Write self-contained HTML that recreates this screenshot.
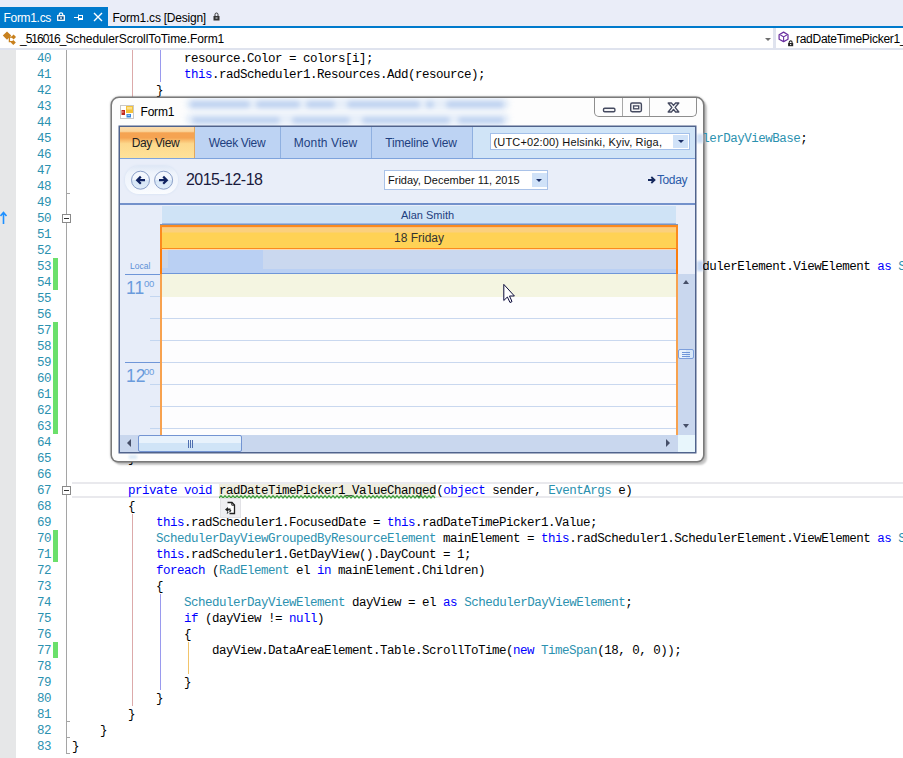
<!DOCTYPE html>
<html><head><meta charset="utf-8"><title>Form1.cs</title>
<style>
html,body{margin:0;padding:0}
body{width:903px;height:758px;position:relative;overflow:hidden;background:#fff;font-family:"Liberation Sans",sans-serif;font-size:12px;color:#000}
.abs{position:absolute}
#tabbar{left:0;top:0;width:903px;height:26px;background:#eaedf8}
#tabactive{left:0;top:7px;width:108px;height:21px;background:#007acc;color:#fff}
#tabline{left:0;top:26px;width:903px;height:2px;background:#007acc}
.tabtxt{position:absolute;top:4px;font-size:12px;line-height:14px;white-space:pre;letter-spacing:-0.15px}
#navbar{left:0;top:28px;width:903px;height:20px;background:#fff;border-bottom:2px solid #dfe3ee}
#gutter{left:0;top:50px;width:16px;height:708px;background:#e6e7e8}
.ln{position:absolute;left:16px;width:35px;text-align:right;height:16px;line-height:16px;font-family:"Liberation Mono",monospace;font-size:12.5px;letter-spacing:-0.5px;color:#2b91af;white-space:pre}
.cl{position:absolute;left:72px;height:16px;line-height:16px;font-family:"Liberation Mono",monospace;font-size:12.5px;letter-spacing:-0.5px;color:#000;white-space:pre}
.hl{background:#efeee0}
.chg{position:absolute;left:53px;width:5px;background:#6be06b}
.guide{position:absolute;width:1px}
/* form window */
#win{left:112px;top:97.5px;width:591px;height:363px;border-radius:7px 7px 6px 6px;background:#fdfdfd;box-shadow:0 0 0 1.5px #7a7a7a, 0 0 2px 2px rgba(0,0,0,.18), 3px 3px 2px 1px rgba(0,0,0,.22)}
#client{left:8px;top:29.5px;width:575px;height:325px;background:#e9eef9;box-shadow:0 0 0 1.5px #50638c;overflow:hidden}
.vtab{position:absolute;top:0;height:31px;line-height:32px;letter-spacing:-0.35px;text-align:center;color:#1e3f7f;font-size:12px;background:#bdd3f3;border-right:1px solid #8fb0e0;box-sizing:border-box}
</style></head>
<body>
<!-- VS tab strip -->
<div id="tabbar" class="abs"></div>
<div id="tabline" class="abs"></div>
<div id="tabactive" class="abs">
  <span class="tabtxt" style="left:3.5px;letter-spacing:-0.31px">Form1.cs</span>
  <svg class="abs" style="left:56.5px;top:5px" width="8" height="9" viewBox="0 0 8 9"><rect x="0.7" y="3.7" width="6.6" height="4.6" fill="#0a4f8a" stroke="#fff" stroke-width="1.3"/><path d="M2.2 3.5V2.6a1.8 1.8 0 0 1 3.6 0V3.5" stroke="#fff" fill="none" stroke-width="1.2"/><rect x="3.2" y="5.2" width="1.6" height="1.6" fill="#fff"/></svg>
  <svg class="abs" style="left:74px;top:6px" width="10" height="9" viewBox="0 0 10 9"><path d="M0 4.5H4M4.5 1.5V7.5M4.5 2.5H8.5M4.5 5.5H8.5M8.5 2V7M4.5 6.5H8.5" stroke="#fff" stroke-width="1" fill="none"/></svg>
  <svg class="abs" style="left:93px;top:5px" width="10" height="10" viewBox="0 0 10 10"><path d="M1 1L9 9M9 1L1 9" stroke="#fff" stroke-width="1.4" fill="none"/></svg>
</div>
<span class="tabtxt abs" style="left:112.5px;top:11px;color:#000;letter-spacing:-0.23px">Form1.cs [Design]</span>
<svg class="abs" style="left:213px;top:12px" width="7" height="9" viewBox="0 0 7 9"><rect x="0.5" y="4" width="6" height="4.5" fill="#333"/><path d="M2 4V2.5a1.5 1.5 0 0 1 3 0V4" stroke="#333" fill="none" stroke-width="1"/><rect x="2.5" y="5.5" width="2" height="1" fill="#eaedf8"/></svg>

<!-- nav bar -->
<div id="navbar" class="abs">
  <svg class="abs" style="left:1px;top:1.5px" width="16" height="16" viewBox="0 0 16 16"><path d="M1.8 5.6L6 1.4L10.2 5.6L6 9.8Z" fill="#c8811e"/><path d="M12.4 7.2H8.4V11.7H12.2" stroke="#c8811e" stroke-width="1.3" fill="none"/><path d="M10.2 7L12.6 4.6L15 7L12.6 9.4Z" fill="#c8811e"/><path d="M9.8 12.6L12.3 10.1L14.8 12.6L12.3 15.1Z" fill="#c8811e"/></svg>
  <span class="abs" style="left:20px;top:4px;font-size:12px;line-height:14px;white-space:pre;letter-spacing:-0.08px"><span style="letter-spacing:-1px">_516016_</span>SchedulerScrollToTime.Form1</span>
  <div class="abs" style="left:765px;top:10px;width:0;height:0;border-left:3px solid transparent;border-right:3px solid transparent;border-top:3px solid #6e6e6e"></div>
  <div class="abs" style="left:773px;top:0;width:3px;height:20px;background:#dfe3ee"></div>
  <svg class="abs" style="left:777.2px;top:2.6px" width="17" height="16" viewBox="0 0 17 16"><path d="M6.6 1.1L11 3.7V8.2L6.6 10.6L2.1 8.2V3.7Z" fill="#fff" stroke="#6a2fa0" stroke-width="1.25" stroke-linejoin="round"/><path d="M6.6 10.4V5.9L3.4 4M6.6 5.9L9.8 4" stroke="#6a2fa0" stroke-width="1.1" fill="none"/><rect x="11.1" y="12" width="5.1" height="3.2" fill="#262626"/><path d="M12.2 12V11.3a1.45 1.45 0 0 1 2.9 0V12" stroke="#262626" fill="none" stroke-width="1.1"/><rect x="13.1" y="13" width="1.1" height="1.1" fill="#fff"/></svg>
  <span class="abs" style="left:796px;top:4px;font-size:12px;line-height:14px;white-space:pre;letter-spacing:-0.28px">radDateTimePicker1_ValueChanged(object sender,</span>
</div>

<!-- editor -->
<div id="gutter" class="abs"></div>
<div class="abs" style="left:66px;top:50px;width:1px;height:704px;background:#a5a5a5"></div>
<div class="abs" style="left:72px;top:482px;width:840px;height:12px;border:2px solid #e9e9ed;border-right:0;border-left:0"></div>
<!-- change bars -->
<div class="chg" style="top:258px;height:32px"></div>
<div class="chg" style="top:322px;height:112px"></div>
<div class="chg" style="top:530px;height:32px"></div>
<div class="chg" style="top:642px;height:16px"></div>
<!-- indent guides -->
<div class="guide" style="left:132px;top:50px;height:48px;background:#dcaaaa"></div>
<div class="guide" style="left:160px;top:50px;height:32px;background:#9a9aee"></div>
<div class="guide" style="left:132px;top:514px;height:192px;background:#dcaaaa"></div>
<div class="guide" style="left:160px;top:594px;height:96px;background:#9a9aee"></div>
<div class="guide" style="left:188px;top:642px;height:32px;background:#f2c46a"></div>
<!-- outline boxes -->
<div class="abs" style="left:62px;top:214px;width:7px;height:7px;border:1px solid #8a8a8a;background:#fff"><div class="abs" style="left:1px;top:3px;width:5px;height:1px;background:#333"></div></div>
<div class="abs" style="left:62px;top:486px;width:7px;height:7px;border:1px solid #8a8a8a;background:#fff"><div class="abs" style="left:1px;top:3px;width:5px;height:1px;background:#333"></div></div>
<div class="abs" style="left:66px;top:193px;width:4px;height:1px;background:#a5a5a5"></div>
<div class="abs" style="left:66px;top:721px;width:4px;height:1px;background:#a5a5a5"></div>
<div class="abs" style="left:66px;top:737px;width:4px;height:1px;background:#a5a5a5"></div>
<div class="abs" style="left:66px;top:753px;width:4px;height:1px;background:#a5a5a5"></div>
<!-- blue arrow in margin -->
<svg class="abs" style="left:0;top:211px" width="8" height="13" viewBox="0 0 8 13"><path d="M3.5 13V2M0.5 5L3.5 1.5L6.5 5" stroke="#1e90ff" stroke-width="1.6" fill="none"/></svg>
<div class="ln" style="top:51px">40</div>
<div class="cl" style="top:51px">                resource.Color = colors[i];</div>
<div class="ln" style="top:67px">41</div>
<div class="cl" style="top:67px">                <span style="color:#0000ff">this</span>.radScheduler1.Resources.Add(resource);</div>
<div class="ln" style="top:83px">42</div>
<div class="cl" style="top:83px">            }</div>
<div class="ln" style="top:99px">43</div>
<div class="ln" style="top:115px">44</div>
<div class="ln" style="top:131px">45</div>
<div class="ln" style="top:147px">46</div>
<div class="ln" style="top:163px">47</div>
<div class="ln" style="top:179px">48</div>
<div class="ln" style="top:195px">49</div>
<div class="ln" style="top:211px">50</div>
<div class="ln" style="top:227px">51</div>
<div class="ln" style="top:243px">52</div>
<div class="ln" style="top:259px">53</div>
<div class="ln" style="top:275px">54</div>
<div class="ln" style="top:291px">55</div>
<div class="ln" style="top:307px">56</div>
<div class="ln" style="top:323px">57</div>
<div class="ln" style="top:339px">58</div>
<div class="ln" style="top:355px">59</div>
<div class="ln" style="top:371px">60</div>
<div class="ln" style="top:387px">61</div>
<div class="ln" style="top:403px">62</div>
<div class="ln" style="top:419px">63</div>
<div class="ln" style="top:435px">64</div>
<div class="ln" style="top:451px">65</div>
<div class="cl" style="top:451px">        }</div>
<div class="ln" style="top:467px">66</div>
<div class="ln" style="top:483px">67</div>
<div class="cl" style="top:483px">        <span style="color:#0000ff">private</span> <span style="color:#0000ff">void</span> <span class="hl">radDateTimePicker1_ValueChanged</span>(<span style="color:#0000ff">object</span> sender, <span style="color:#2b91af">EventArgs</span> e)</div>
<div class="ln" style="top:499px">68</div>
<div class="cl" style="top:499px">        {</div>
<div class="ln" style="top:515px">69</div>
<div class="cl" style="top:515px">            <span style="color:#0000ff">this</span>.radScheduler1.FocusedDate = <span style="color:#0000ff">this</span>.radDateTimePicker1.Value;</div>
<div class="ln" style="top:531px">70</div>
<div class="cl" style="top:531px">            <span style="color:#2b91af">SchedulerDayViewGroupedByResourceElement</span> mainElement = <span style="color:#0000ff">this</span>.radScheduler1.SchedulerElement.ViewElement <span style="color:#0000ff">as</span> <span style="color:#2b91af">SchedulerDayViewGroupedByResourceElement</span>;</div>
<div class="ln" style="top:547px">71</div>
<div class="cl" style="top:547px">            <span style="color:#0000ff">this</span>.radScheduler1.GetDayView().DayCount = 1;</div>
<div class="ln" style="top:563px">72</div>
<div class="cl" style="top:563px">            <span style="color:#0000ff">foreach</span> (<span style="color:#2b91af">RadElement</span> el <span style="color:#0000ff">in</span> mainElement.Children)</div>
<div class="ln" style="top:579px">73</div>
<div class="cl" style="top:579px">            {</div>
<div class="ln" style="top:595px">74</div>
<div class="cl" style="top:595px">                <span style="color:#2b91af">SchedulerDayViewElement</span> dayView = el <span style="color:#0000ff">as</span> <span style="color:#2b91af">SchedulerDayViewElement</span>;</div>
<div class="ln" style="top:611px">75</div>
<div class="cl" style="top:611px">                <span style="color:#0000ff">if</span> (dayView != <span style="color:#0000ff">null</span>)</div>
<div class="ln" style="top:627px">76</div>
<div class="cl" style="top:627px">                {</div>
<div class="ln" style="top:643px">77</div>
<div class="cl" style="top:643px">                    dayView.DataAreaElement.Table.ScrollToTime(<span style="color:#0000ff">new</span> <span style="color:#2b91af">TimeSpan</span>(18, 0, 0));</div>
<div class="ln" style="top:659px">78</div>
<div class="ln" style="top:675px">79</div>
<div class="cl" style="top:675px">                }</div>
<div class="ln" style="top:691px">80</div>
<div class="cl" style="top:691px">            }</div>
<div class="ln" style="top:707px">81</div>
<div class="cl" style="top:707px">        }</div>
<div class="ln" style="top:723px">82</div>
<div class="cl" style="top:723px">    }</div>
<div class="ln" style="top:739px">83</div>
<div class="cl" style="top:739px">}</div>
<!-- small refactor icon -->
<svg class="abs" style="left:219px;top:494.6px" width="217" height="4" viewBox="0 0 217 4"><polyline points="0,3 2,0.6 4,3 6,0.6 8,3 10,0.6 12,3 14,0.6 16,3 18,0.6 20,3 22,0.6 24,3 26,0.6 28,3 30,0.6 32,3 34,0.6 36,3 38,0.6 40,3 42,0.6 44,3 46,0.6 48,3 50,0.6 52,3 54,0.6 56,3 58,0.6 60,3 62,0.6 64,3 66,0.6 68,3 70,0.6 72,3 74,0.6 76,3 78,0.6 80,3 82,0.6 84,3 86,0.6 88,3 90,0.6 92,3 94,0.6 96,3 98,0.6 100,3 102,0.6 104,3 106,0.6 108,3 110,0.6 112,3 114,0.6 116,3 118,0.6 120,3 122,0.6 124,3 126,0.6 128,3 130,0.6 132,3 134,0.6 136,3 138,0.6 140,3 142,0.6 144,3 146,0.6 148,3 150,0.6 152,3 154,0.6 156,3 158,0.6 160,3 162,0.6 164,3 166,0.6 168,3 170,0.6 172,3 174,0.6 176,3 178,0.6 180,3 182,0.6 184,3 186,0.6 188,3 190,0.6 192,3 194,0.6 196,3 198,0.6 200,3 202,0.6 204,3 206,0.6 208,3 210,0.6 212,3 214,0.6 216,3" fill="none" stroke="#3f9e3f" stroke-width="1.2" stroke-linejoin="round"/></svg>
<div class="abs" style="left:220px;top:498px;width:19px;height:18px;background:#efeff2;border:1px solid #e2e2e6;box-sizing:content-box"></div>
<svg class="abs" style="left:224px;top:501px" width="12" height="14" viewBox="0 0 12 14"><path d="M3.5 1.5H8L10.5 4V12.5H5.5" fill="#fff" stroke="#222" stroke-width="1.3"/><path d="M7.8 1.5V4.2H10.5" fill="none" stroke="#222" stroke-width="1"/><path d="M1 8.5L4 6v1.6h2.5v1.8H4V11z" fill="#222"/><path d="M3 12.5l1.2-1.5M5.5 11.2l1.5-2" stroke="#222" stroke-width="1.1"/></svg>

<!-- Form1 window -->
<div id="win" class="abs">
  <!-- blurred glass smudges -->
  <div class="abs" style="left:60px;top:0;width:440px;height:29px;overflow:hidden">
<div class="abs" style="left:0;top:0;width:440px;height:29px;filter:blur(2.6px);opacity:.85">
<div class="abs" style="left:13px;top:1px;width:325px;height:12px;margin-top:-1px;background:#e4edf9;border-radius:6px"></div>
<div class="abs" style="left:13px;top:16px;width:325px;height:12px;margin-top:-1px;background:#e4edf9;border-radius:6px"></div>
<div class="abs" style="left:18px;top:4.5px;width:60px;height:7px;margin-top:-1px;background:#b4cbee;border-radius:4px"></div>
<div class="abs" style="left:84px;top:4.5px;width:44px;height:7px;margin-top:-1px;background:#b4cbee;border-radius:4px"></div>
<div class="abs" style="left:134px;top:4.5px;width:29px;height:7px;margin-top:-1px;background:#b4cbee;border-radius:4px"></div>
<div class="abs" style="left:175px;top:4.5px;width:73px;height:7px;margin-top:-1px;background:#b4cbee;border-radius:4px"></div>
<div class="abs" style="left:254px;top:4.5px;width:8px;height:7px;margin-top:-1px;background:#b4cbee;border-radius:4px"></div>
<div class="abs" style="left:274px;top:4.5px;width:58px;height:7px;margin-top:-1px;background:#b4cbee;border-radius:4px"></div>
<div class="abs" style="left:20px;top:20.5px;width:88px;height:7px;margin-top:-1px;background:#b4cbee;border-radius:4px"></div>
<div class="abs" style="left:120px;top:20.5px;width:58px;height:7px;margin-top:-1px;background:#b4cbee;border-radius:4px"></div>
<div class="abs" style="left:190px;top:20.5px;width:88px;height:7px;margin-top:-1px;background:#b4cbee;border-radius:4px"></div>
<div class="abs" style="left:286px;top:20.5px;width:46px;height:7px;margin-top:-1px;background:#b4cbee;border-radius:4px"></div>
</div></div>
  <!-- icon -->
  <svg class="abs" style="left:8px;top:7.5px" width="14" height="14" viewBox="0 0 14 14"><rect x="0.5" y="0.5" width="13" height="13" fill="#fff" stroke="#c8c8c8"/><rect x="1.5" y="5" width="3.5" height="5" fill="#c0281c"/><rect x="2.3" y="6" width="1.2" height="2" fill="#e88"/><rect x="6" y="1" width="7" height="7" fill="#f5c23a"/><rect x="7" y="2" width="5" height="2.5" fill="#fbe08a"/><rect x="6.5" y="9" width="4.5" height="3.5" fill="#3a86dc"/><rect x="7.5" y="9.8" width="2.5" height="1.2" fill="#9cc6f2"/></svg>
  <span class="abs" style="left:28.5px;top:7.5px;font-size:12px;line-height:14px;letter-spacing:-0.2px">Form1</span>
  <!-- caption buttons -->
  <div class="abs" style="left:482px;top:0;width:103px;height:19px;border:1px solid #8e8e8e;border-top:0;border-radius:0 0 5px 5px;background:#fdfdfd;box-sizing:border-box">
    <div class="abs" style="left:27px;top:0;width:1px;height:18px;background:#a8a8a8"></div>
    <div class="abs" style="left:54px;top:0;width:1px;height:18px;background:#a8a8a8"></div>
    <svg class="abs" style="left:0;top:0" width="60" height="18" viewBox="0 0 60 18"><rect x="8.5" y="10.3" width="11.4" height="3.4" rx="1.2" fill="#f4f4f6" stroke="#454a60" stroke-width="1.4"/><rect x="35.7" y="5" width="10.7" height="8.7" rx="1.4" fill="#f4f4f6" stroke="#454a60" stroke-width="1.4"/><rect x="38.6" y="7.9" width="5.1" height="2.9" fill="#fff" stroke="#454a60" stroke-width="1.3"/></svg>
    <svg class="abs" style="left:72px;top:4px" width="13" height="11" viewBox="0 0 13 11"><path d="M1.2 1h3.2L6.5 3.4 8.6 1h3.2L8.1 5.4 11.8 10H8.6L6.5 7.4 4.4 10H1.2L4.9 5.4z" fill="#fff" stroke="#454a60" stroke-width="1.4" stroke-linejoin="round"/></svg>
  </div>

  <div class="abs" style="left:585px;top:36px;width:6px;height:9px;background:#cfe0f6;filter:blur(1px)"></div>
  <div class="abs" style="left:585px;top:163.5px;width:6px;height:10px;background:#c3d6f3;filter:blur(1px)"></div>
  <div class="abs" style="left:17px;top:357.5px;width:8px;height:4px;background:#dcebf8;filter:blur(0.8px)"></div>
  <div id="client" class="abs">
    <!-- view tabs row -->
    <div class="abs" style="left:0;top:0;width:577px;height:31px;background:#d0e4f7;border-bottom:1px solid #7ea3dc"></div>
    <div class="vtab" style="left:0;width:75px;text-indent:-3px;background:linear-gradient(#fbdcae 0,#fbd49a 14%,#f5a352 19%,#f5a352 35%,#f9bb6c 43%,#fdd88c 54%,#fee29a 100%);color:#222;border-right:1px solid #e2a85e">Day View</div>
    <div class="vtab" style="left:75px;width:86px;text-indent:-1px">Week View</div>
    <div class="vtab" style="left:161px;width:91px;letter-spacing:0.1px;text-indent:-1px">Month View</div>
    <div class="vtab" style="left:252px;width:101px;letter-spacing:-0.2px;text-indent:-2px">Timeline View</div>
    <!-- timezone combo -->
    <div class="abs" style="left:370px;top:6px;width:198px;height:15px;background:#fff;border:1px solid #a3c0ea">
      <span class="abs" style="left:2.5px;top:0.5px;font-size:11px;line-height:15px;white-space:pre;color:#111;letter-spacing:0.16px">(UTC+02:00) Helsinki, Kyiv, Riga,</span>
      <div class="abs" style="left:182px;top:1px;width:15px;height:13px;background:#d0e2f8"></div>
      <div class="abs" style="left:186.5px;top:6px;width:0;height:0;border-left:3px solid transparent;border-right:3px solid transparent;border-top:3.5px solid #1b2f66"></div>
    </div>
    <!-- nav row -->
    <div class="abs" style="left:0;top:32px;width:577px;height:44px;background:#e9eef9;border-bottom:2px solid #7391cb"></div>
    <div class="abs" style="left:5px;top:38.5px;width:53px;height:28px;border-radius:14.5px;background:linear-gradient(#dfe8f6 0,#eef3fb 25%,#f3f7fd 70%,#fbfdff 100%);box-shadow:0 0 2px 1px #dde6f5"></div>
    <svg class="abs" style="left:10px;top:43px" width="46" height="21" viewBox="0 0 46 21">
      <defs><linearGradient id="cb" x1="0" y1="0" x2="0" y2="1"><stop offset="0" stop-color="#f5f8fd"/><stop offset="0.5" stop-color="#f0f5fc"/><stop offset="0.5" stop-color="#d6e6f6"/><stop offset="1" stop-color="#dfecf9"/></linearGradient></defs>
      <circle cx="10.5" cy="10.2" r="9" fill="url(#cb)" stroke="#8a9fc8"/><path d="M15 10.2H7.5M10.8 6.6L7.2 10.2L10.8 13.8" stroke="#0f2260" stroke-width="2.2" fill="none"/>
      <circle cx="33.6" cy="10.2" r="9" fill="url(#cb)" stroke="#8a9fc8"/><path d="M29 10.2H36.5M33.2 6.6L36.8 10.2L33.2 13.8" stroke="#0f2260" stroke-width="2.2" fill="none"/>
    </svg>
    <span class="abs" style="left:66px;top:44px;font-size:16px;line-height:18px;color:#1a1a3c;white-space:pre;letter-spacing:-0.55px">2015-12-18</span>
    <div class="abs" style="left:264px;top:43px;width:162px;height:17.5px;background:#fff;border:1px solid #a9c2e8">
      <span class="abs" style="left:3px;top:1.5px;font-size:11px;line-height:14px;white-space:pre;color:#111">Friday, December 11, 2015</span>
      <div class="abs" style="left:147px;top:1.5px;width:14.5px;height:14.5px;background:#d0e2f8"></div>
      <div class="abs" style="left:151px;top:7.5px;width:0;height:0;border-left:3px solid transparent;border-right:3px solid transparent;border-top:3.5px solid #1b2f66"></div>
    </div>
    <svg class="abs" style="left:528px;top:49px" width="8" height="8" viewBox="0 0 8 8"><path d="M0 4H6M3.3 1L6.5 4L3.3 7" stroke="#16295e" stroke-width="1.8" fill="none"/></svg>
    <span class="abs" style="left:537px;top:46px;font-size:12px;line-height:14px;color:#2a5aa8;letter-spacing:-0.4px">Today</span>

    <!-- scheduler -->
    <div class="abs" style="left:0;top:78px;width:41px;height:248px;background:#e7edf9"></div>
    <div class="abs" style="left:558px;top:78px;width:18px;height:69px;background:#e9eef9"></div>
    <div class="abs" style="left:42px;top:79px;width:514px;height:18px;background:#cfe3f6;border-bottom:1px solid #9db8e4;text-align:center;font-size:11px;line-height:18px;color:#1e3f7f;padding-left:17px;box-sizing:border-box">Alan Smith</div>
    <div class="abs" style="left:40px;top:97px;width:518px;height:1px;background:#7f93b5"></div>
    <div class="abs" style="left:42px;top:123px;width:514px;height:23px;background:#cad8ef"></div>
    <div class="abs" style="left:42px;top:123px;width:101px;height:23px;background:#bad0f3"></div><div class="abs" style="left:42px;top:123px;width:6px;height:18px;background:#c9d6ea"></div>
    <div class="abs" style="left:42px;top:142px;width:514px;height:4px;background:#bad0f3"></div><div class="abs" style="left:42px;top:146px;width:514px;height:1px;background:#6f96d8"></div>
    <div class="abs" style="left:42px;top:147px;width:514px;height:23px;background:#f4f5e1"></div>
    <div class="abs" style="left:42px;top:170px;width:514px;height:138px;background:repeating-linear-gradient(#fdfdfe 0,#fdfdfe 21px,#c9d8ef 21px,#c9d8ef 22px)"></div>
    <!-- orange borders -->
    <div class="abs" style="left:40px;top:98px;width:2px;height:210px;background:#f7a24f"></div><div class="abs" style="left:40px;top:98px;width:2px;height:49px;background:#fb7d0c"></div>
    <div class="abs" style="left:556px;top:98px;width:2px;height:210px;background:#f7a24f"></div><div class="abs" style="left:556px;top:98px;width:2px;height:49px;background:#fb7d0c"></div>
    <div class="abs" style="left:40px;top:98px;width:518px;height:24px;background:linear-gradient(#fbd07e 0,#fbd07e 5px,#ffd255 6px);border:2px solid #fb8a1e;border-bottom-width:1px;box-sizing:border-box;text-align:center;font-size:12px;line-height:22px;color:#333;box-shadow:inset 0 1px 0 #fcc27a">18 Friday</div>
    <div class="abs" style="left:42px;top:122px;width:514px;height:1px;background:#fbd9b0"></div>
    <!-- ruler -->
    <span class="abs" style="left:10px;top:134px;font-size:8.5px;line-height:10px;color:#5b8fd6">Local</span>
    <div class="abs" style="left:5px;top:147px;width:35px;height:1px;background:#6f96d8"></div>
    <span class="abs" style="left:6px;top:151px;font-size:17.5px;line-height:20px;color:#6a9bdc;letter-spacing:0px">11</span>
    <span class="abs" style="left:24px;top:152px;font-size:9.5px;line-height:10px;color:#6a9bdc;letter-spacing:-0.3px">00</span>
    <div class="abs" style="left:30px;top:169px;width:10px;height:1px;background:#c3d6f0"></div><div class="abs" style="left:30px;top:191px;width:10px;height:1px;background:#c3d6f0"></div>
    <div class="abs" style="left:30px;top:213px;width:10px;height:1px;background:#c3d6f0"></div>
    <div class="abs" style="left:5px;top:235px;width:35px;height:1px;background:#6f96d8"></div>
    <span class="abs" style="left:6px;top:239px;font-size:17.5px;line-height:20px;color:#6a9bdc;letter-spacing:0px">12</span>
    <span class="abs" style="left:24px;top:240px;font-size:9.5px;line-height:10px;color:#6a9bdc;letter-spacing:-0.3px">00</span>
    <div class="abs" style="left:30px;top:257px;width:10px;height:1px;background:#c3d6f0"></div>
    <div class="abs" style="left:30px;top:279px;width:10px;height:1px;background:#c3d6f0"></div>
    <div class="abs" style="left:30px;top:301px;width:10px;height:1px;background:#c3d6f0"></div>
    <!-- vertical scrollbar -->
    <div class="abs" style="left:558px;top:147px;width:18px;height:161px;background:#c9d7ee"></div>
    <div class="abs" style="left:563px;top:153px;width:0;height:0;border-left:3.5px solid transparent;border-right:3.5px solid transparent;border-bottom:4px solid #464f68"></div>
    <div class="abs" style="left:563px;top:297px;width:0;height:0;border-left:3.5px solid transparent;border-right:3.5px solid transparent;border-top:4px solid #464f68"></div>
    <div class="abs" style="left:558px;top:222px;width:14px;height:8px;background:linear-gradient(90deg,#e8f2fc 0,#e8f2fc 50%,#d6e7f9 50%);border:1px solid #7d9fdc;border-radius:2px"><div class="abs" style="left:3px;top:2px;width:8px;height:1px;background:#6f96d8;box-shadow:0 2px 0 #6f96d8,0 4px 0 #6f96d8"></div></div>
    <!-- horizontal scrollbar -->
    <div class="abs" style="left:0;top:308px;width:558px;height:17px;background:#c9d7ee"></div>
    <div class="abs" style="left:558px;top:308px;width:17px;height:17px;background:#e8f6fc"></div>
    <div class="abs" style="left:7px;top:312px;width:0;height:0;border-top:4px solid transparent;border-bottom:4px solid transparent;border-right:4.5px solid #464f68"></div>
    <div class="abs" style="left:546px;top:312px;width:0;height:0;border-top:4px solid transparent;border-bottom:4px solid transparent;border-left:4.5px solid #464f68"></div>
    <div class="abs" style="left:18px;top:308px;width:102px;height:15px;background:linear-gradient(#e8f2fc 0,#e8f2fc 45%,#d0e4f7 45%,#d0e4f7 100%);border:1px solid #7394d2;border-radius:2px"><div class="abs" style="left:49px;top:4px;width:1px;height:8px;background:#4f6fb0;box-shadow:2px 0 0 #4f6fb0,4px 0 0 #4f6fb0"></div></div>
  </div>
</div>
<div class="abs clipwrap" style="left:703px;top:131px;width:200px;height:16px;overflow:hidden"><div class="cl" style="left:-631px;top:0">            <span style="color:#2b91af">SchedulerDayViewBase</span> dayViewBase = (this.radScheduler1.GetDayView()) <span style="color:#0000ff">as</span> <span style="color:#2b91af">SchedulerDayViewBase</span>;</div></div>
<div class="abs clipwrap" style="left:703px;top:259px;width:200px;height:16px;overflow:hidden"><div class="cl" style="left:-631px;top:0">            <span style="color:#2b91af">SchedulerDayViewGroupedByResourceElement</span> mainElement = <span style="color:#0000ff">this</span>.radScheduler1.SchedulerElement.ViewElement <span style="color:#0000ff">as</span> <span style="color:#2b91af">SchedulerDayViewGroupedByResourceElement</span>;</div></div>
<!-- mouse cursor -->
<svg class="abs" style="left:503px;top:283px" width="15" height="22" viewBox="0 0 15 22"><path d="M0.8 1.4V17.5L4.4 14L7 19.5L9 18.6L6.5 13H11.4Z" fill="#fff" stroke="#0b0b3a" stroke-width="1" stroke-linejoin="miter"/></svg>
</body></html>
